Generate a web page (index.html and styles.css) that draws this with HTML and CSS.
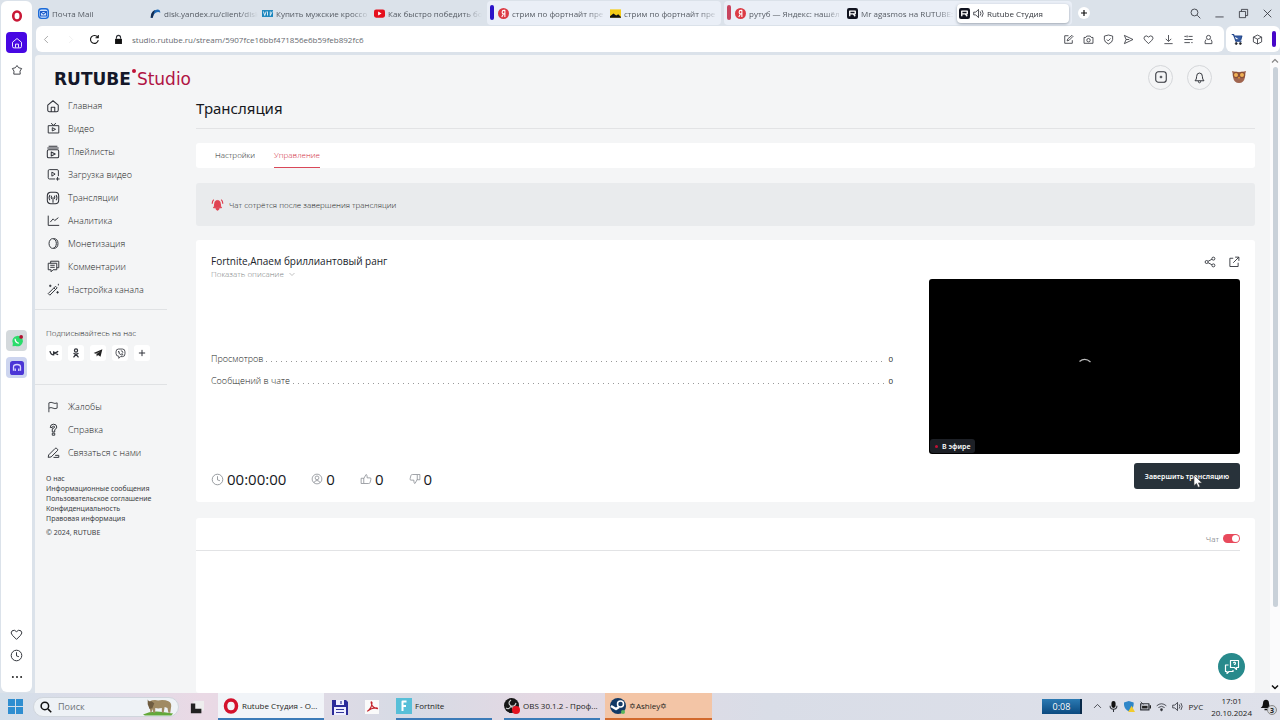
FILE: index.html
```html
<!DOCTYPE html>
<html lang="ru">
<head>
<meta charset="utf-8">
<title>Rutube Студия</title>
<link rel="stylesheet" href="styles.css">
</head>
<body>
<svg class="sprite" aria-hidden="true">
  <symbol id="home" viewBox="0 0 16 16"><path d="M2 7 8 2l6 5v5.500q0 2-2 2H4q-2 0-2-2zM6 14V9.500h4V14"/></symbol>
  <symbol id="star" viewBox="0 0 16 16"><path d="m8 2 2.200 3 4 1-2.200 3.500.3 4H3.700L4 9.500 1.800 6l4-1z"/></symbol>
  <symbol id="heart" viewBox="0 0 16 16"><path d="M8 14 3 9Q0 6 2.500 3.500 5.500 1.500 8 4.500q2.500-3 5.500-1Q16 6 13 9z"/></symbol>
  <symbol id="clock" viewBox="0 0 16 16"><circle cx="8" cy="8" r="6.500"/><path d="M8 4v4.500l3 1"/></symbol>
  <symbol id="search" viewBox="0 0 16 16"><circle cx="6.500" cy="6.500" r="5"/><path d="m10.500 10.500 4.500 4.500"/></symbol>
  <symbol id="video" viewBox="0 0 16 16"><path d="M1.500 4.500h13v9h-13zM5 1.500 8 4l3-2.500M6.500 7v4l4-2z"/></symbol>
  <symbol id="playlist" viewBox="0 0 16 16"><path d="M3 1.500h10M1.500 3.500h13M3 5.500h10q1.500 0 1.500 1.500v6q0 1.500-1.500 1.500H3q-1.500 0-1.500-1.500V7Q1.500 5.500 3 5.500zM6 8v4.500l4.500-2.200z"/></symbol>
  <symbol id="upload" viewBox="0 0 16 16"><path d="M10 13.500H3q-1.500 0-1.500-1.500V3.500Q1.500 2 3 2h9.500Q14 2 14 3.500V10M6 5v5l4-2.500zM13 11v4.500M11 13.500h4.500"/></symbol>
  <symbol id="stream" viewBox="0 0 16 16"><rect x="1.500" y="1.500" width="13" height="13" rx="4"/><path d="M8 7v6.500M4.500 4.500q-2 3 0 6M11.500 4.500q2 3 0 6M6.500 5.500q-1.200 1.800 0 3.500M9.500 5.500q1.200 1.800 0 3.500"/></symbol>
  <symbol id="chart" viewBox="0 0 16 16"><path d="M1.500 2v12H15M4 10l3.500-4 2 2L14 4.500"/></symbol>
  <symbol id="coin" viewBox="0 0 16 16"><ellipse cx="7" cy="8" rx="4.500" ry="6"/><path d="M8 2q5.500 0 5.500 6T8 14"/></symbol>
  <symbol id="comments" viewBox="0 0 16 16"><path d="M4.500 4V1.500h10v8H12M1.500 4H12v8H7.500L5 14.500V12H1.500zM4 6.500h5.500M4 9h5.500"/></symbol>
  <symbol id="wand" viewBox="0 0 16 16"><path d="m1.500 13 9-9L12.500 6l-9 9zM8.500 6l2 2M4 2v3M2.500 3.500h3M13 10v3M11.500 11.500h3M14 1v2"/></symbol>
  <symbol id="flag" viewBox="0 0 16 16"><path d="M2.500 15V2.500q3-1.500 5.500 0t5.500 0v7q-3 1.500-5.500 0t-5.500 0"/></symbol>
  <symbol id="help" viewBox="0 0 16 16"><path d="M4 5.500Q4 1.500 8 1.500T12 5Q12 7 9.500 8.200V11h-3V7Q9.500 6 9.500 5q0-1-1.500-1T6.500 5.500zM6.500 12.500h3V15h-3z"/></symbol>
  <symbol id="edit" viewBox="0 0 16 16"><path d="m2 11 8-8q1-1 2 0l.8.8q1 1 0 2L5 13.500l-3.500.5zM8 14h6.500M10 11.500h4.500V14"/></symbol>
  <symbol id="share" viewBox="0 0 16 16"><circle cx="3.500" cy="8" r="2"/><circle cx="12.500" cy="3.500" r="2"/><circle cx="12.500" cy="12.500" r="2"/><path d="m5.500 7 5-2.600M5.500 9l5 2.600"/></symbol>
  <symbol id="external" viewBox="0 0 16 16"><path d="M7 3H2.500v11h11V9M9.500 1.500h5v5M14.500 1.500 7 9"/></symbol>
  <symbol id="bell" viewBox="0 0 16 16"><path d="M2.500 12q2-1.500 2-5.500 0-4 3.500-4t3.500 4q0 4 2 5.500zM6.500 12.500q0 2 1.500 2t1.500-2"/></symbol>
  <symbol id="add" viewBox="0 0 16 16"><rect x="2" y="2" width="12" height="12" rx="3"/><path d="M8 6.500v3M6.500 8h3"/></symbol>
  <symbol id="user" viewBox="0 0 16 16"><circle cx="8" cy="8" r="6.500"/><circle cx="8" cy="6.500" r="2.500"/><path d="M4 13q1-3 4-3t4 3"/></symbol>
  <symbol id="like" viewBox="0 0 16 16"><path d="M1.500 7H5v7H1.500zM5 7.500 8 2q2 0 1.500 4.500h4q1.500 0 1 2l-1 4q-.3 1.500-2 1.500H5"/></symbol>
  <symbol id="dislike" viewBox="0 0 16 16"><path d="M14.500 9H11V2h3.500zM11 8.500 8 14q-2 0-1.500-4.500h-4q-1.500 0-1-2l1-4Q2.800 2 4.500 2H11"/></symbol>
  <symbol id="down" viewBox="0 0 16 16"><path d="m3 6 5 5 5-5"/></symbol>
  <symbol id="sound" viewBox="0 0 16 16"><path d="M1 6h3l4-4v12l-4-4H1zM10.500 5q2 3 0 6M13 3q3.500 5 0 10"/></symbol>
  <symbol id="rutube" viewBox="0 0 16 16"><rect width="16" height="16" rx="3" fill="#10131f" stroke="none"/><path d="M4 12V4.500h8v4H4M9 8.500l3 3.500" stroke="#fff" stroke-width="2"/></symbol>
  <symbol id="yandex" viewBox="0 0 16 16"><circle cx="8" cy="8" r="8" fill="#dc3b45" stroke="none"/><path d="M10 13V3.500H8.500Q6 3.500 6 6t2.500 2.500H10M8 8.500 5.500 13" stroke="#fff" stroke-width="1.600"/></symbol>
</svg>

<div class="desktop">
  <div class="browser">
    <aside class="dock" aria-label="Боковая панель">
      <div class="dock-group">
        <button class="dock-btn" aria-label="Opera"><svg class="i12" viewBox="0 0 16 16"><ellipse cx="8" cy="8" rx="5" ry="6" stroke="#c91836" stroke-width="3.500"/></svg></button>
        <button class="dock-btn active" aria-label="Домой"><svg class="i12"><use href="#home"/></svg></button>
        <button class="dock-btn" aria-label="Закладки"><svg class="i12"><use href="#star"/></svg></button>
      </div>
      <div class="dock-group">
        <button class="dock-btn grey" aria-label="WhatsApp"><svg class="i12" viewBox="0 0 16 16"><path d="M2 15 2.500 11A7 7 0 1 1 6 14.500z" fill="#2bdc6b" stroke="none"/><path d="M5.500 5q0 5 5 6" stroke="#fff" stroke-width="1.600"/><circle cx="13.500" cy="2.500" r="2.500" fill="#b01030" stroke="none"/></svg></button>
        <button class="dock-btn lilac" aria-label="Плеер"><svg class="i14" viewBox="0 0 16 16"><rect width="16" height="16" rx="3" fill="#4a35d6" stroke="none"/><path d="M4 11V7q0-3 4-3t4 3v4M6 8.500v3M10 8.500v3" stroke="#d8d4ff" stroke-width="1.500"/></svg></button>
      </div>
      <div class="dock-group">
        <button class="dock-btn" aria-label="Избранное"><svg class="i13"><use href="#heart"/></svg></button>
        <button class="dock-btn" aria-label="История"><svg class="i13"><use href="#clock"/></svg></button>
        <button class="dock-btn" aria-label="Ещё"><svg class="i12" viewBox="0 0 16 16"><g fill="#222" stroke="none"><circle cx="2.500" cy="8" r="1.300"/><circle cx="8" cy="8" r="1.300"/><circle cx="13.500" cy="8" r="1.300"/></g></svg></button>
      </div>
    </aside>

    <div class="window">
      <div class="tabs">
        <button class="tab"><svg class="i11" viewBox="0 0 16 16"><rect x="1" y="1" width="14" height="14" rx="4" fill="#cfe3ff" stroke="#1c6bd8" stroke-width="2"/><path d="M3.500 5h9v6.500h-9zl4.500 4 4.500-4" stroke="#1c5bc8" stroke-width="1.500"/></svg><span>Почта Mail</span></button>
        <button class="tab"><svg class="i11" viewBox="0 0 16 16"><path d="M1 14Q1 3 11 2q4 0 4 5-2-2-5-1Q5 8 4 14z" fill="#1d67b5" stroke="none"/><path d="M1 14q0-8 6-11l-3 11z" fill="#142c50" stroke="none"/></svg><span>disk.yandex.ru/client/disk</span></button>
        <button class="tab"><svg class="i11" viewBox="0 0 16 16"><rect y="3" width="16" height="10" fill="#1784bd" stroke="none"/><path d="m2 5 2 6 2-6M8 5v6M12 5v6l3-6" stroke="#fff"/></svg><span>Купить мужские кроссо</span></button>
        <button class="tab"><svg class="i11" viewBox="0 0 16 16"><rect y="2" width="16" height="12" rx="3" fill="#e5101d" stroke="none"/><path d="M6 5v6l5-3z" fill="#fff" stroke="none"/></svg><span>Как быстро победить бо</span></button>
        <div class="tab-group blue">
          <button class="tab"><svg class="i11"><use href="#yandex"/></svg><span>стрим по фортнайт пре</span></button>
          <button class="tab"><svg class="i11" viewBox="0 0 16 16"><rect y="2" width="16" height="12" fill="#f5cc16" stroke="none"/><path d="M0 14v-2l5-4 4 3 3-2 4 4v1z" fill="#111" stroke="none"/></svg><span>стрим по фортнайт пре</span></button>
        </div>
        <div class="tab-group red">
          <button class="tab"><svg class="i11"><use href="#yandex"/></svg><span>рутуб — Яндекс: нашёл</span></button>
          <button class="tab"><svg class="i11"><use href="#rutube"/></svg><span>Mr agasmos на RUTUBE:</span></button>
          <button class="tab current"><svg class="i11"><use href="#rutube"/></svg><svg class="i11"><use href="#sound"/></svg><span>Rutube Студия</span></button>
        </div>
        <button class="new-tab" aria-label="Новая вкладка"><svg class="i8" viewBox="0 0 8 8"><path d="M4 1v6M1 4h6" stroke="#111"/></svg></button>
        <div class="win-controls">
          <button aria-label="Поиск вкладок"><svg class="i11"><use href="#search"/></svg></button>
          <button aria-label="Свернуть"><svg class="i11" viewBox="0 0 16 16"><path d="M2 13h12"/></svg></button>
          <button aria-label="Развернуть"><svg class="i11" viewBox="0 0 16 16"><path d="M2 5h9v9H2zM5 5V2h9v9h-3"/></svg></button>
          <button aria-label="Закрыть"><svg class="i11" viewBox="0 0 16 16"><path d="m2.500 2.500 11 11M13.500 2.500l-11 11"/></svg></button>
        </div>
      </div>

      <div class="address-row">
        <div class="address">
          <button class="dim" aria-label="Назад"><svg class="i11" viewBox="0 0 16 16"><path d="m10 3-5 5 5 5"/></svg></button>
          <button class="faint" aria-label="Вперёд"><svg class="i11" viewBox="0 0 16 16"><path d="m6 3 5 5-5 5"/></svg></button>
          <button aria-label="Обновить"><svg class="i11" viewBox="0 0 16 16"><path d="M12.500 4.500A5.700 5.700 0 1 0 13.500 9M13.500 1.500v4h-4" stroke="#111" stroke-width="1.600"/></svg></button>
          <svg class="i11" viewBox="0 0 16 16"><path d="M3 7h10v7.500H3z" fill="#111" stroke="none"/><path d="M5 7V5q0-3 3-3t3 3v2" stroke-width="1.600"/></svg>
          <input class="url" type="text" aria-label="Адрес" value="studio.rutube.ru/stream/5907fce16bbf471856e6b59feb892fc6">
          <div class="address-tools">
            <button aria-label="Заметка"><svg class="i11" viewBox="0 0 16 16"><path d="M8 2.500H2.500v11h11V9M6 10l1-3 6-5 1.500 1.500L9 9z"/></svg></button>
            <button aria-label="Снимок"><svg class="i11" viewBox="0 0 16 16"><path d="M1.500 5H4l1.500-2h5L12 5h2.500v8.500h-13z"/><circle cx="8" cy="9" r="2.500"/></svg></button>
            <button aria-label="Защита"><svg class="i11" viewBox="0 0 16 16"><path d="M8 1.500 14 3v5q0 4-6 6.500Q2 12 2 8V3zM5.500 8l2 2 3.500-3.500"/></svg></button>
            <button aria-label="Отправить"><svg class="i11" viewBox="0 0 16 16"><path d="m2 2 12.500 6L2 14l2.500-6zM4.500 8H9"/></svg></button>
            <button aria-label="Нравится"><svg class="i11"><use href="#heart"/></svg></button>
            <button aria-label="Загрузки"><svg class="i11" viewBox="0 0 16 16"><path d="M8 1.500V10M4 7l4 4 4-4M2 14h12"/></svg></button>
            <button aria-label="Настройки"><svg class="i11" viewBox="0 0 16 16"><path d="M2 3.500h3M8 3.500h6M2 8h12M2 12.500h8M12 12.500h2M6 2v3"/></svg></button>
            <button aria-label="Профиль"><svg class="i11" viewBox="0 0 16 16"><circle cx="8" cy="5" r="3"/><path d="M4.500 8Q2.500 10 3 14h10q.5-4-1.500-6"/></svg></button>
          </div>
        </div>
        <div class="extras">
          <button aria-label="Покупки"><svg class="i12" viewBox="0 0 16 16"><path d="M1 2h2.500l3 9H14M4 4h10.500L13 9H6z" fill="#365da8" stroke="#274a8c" stroke-width="1.500"/><circle cx="7" cy="14" r="1.300" fill="#222"/><circle cx="12.500" cy="14" r="1.300" fill="#222"/></svg></button>
          <button aria-label="Расширения"><svg class="i11" viewBox="0 0 16 16"><path d="m8 1.500 6 3v7l-6 3-6-3v-7zM2 4.500l6 3 6-3M8 7.500v7"/></svg></button>
          <span class="purple-bar"></span>
        </div>
      </div>

      <div class="viewport">
        <div class="page">
          <header class="top">
            <a class="logo" href="#"><span>RUTUBE</span><i class="logo-dot"></i><span class="logo-studio">Studio</span></a>
            <div class="top-actions">
              <button class="round" aria-label="Добавить"><svg class="i14"><use href="#add"/></svg></button>
              <button class="round" aria-label="Уведомления"><svg class="i13"><use href="#bell"/></svg></button>
              <button class="avatar" aria-label="Профиль"><svg class="i16" viewBox="0 0 16 16"><path d="M1 2q3 1 7 1t7-1q-1 3-1 6-1 6-6 6T2 8Q2 5 1 2z" fill="#a0654f" stroke="none"/><circle cx="5" cy="6" r="2.600" fill="#f0b155" stroke="#8a4f38"/><circle cx="11" cy="6" r="2.600" fill="#f0b155" stroke="#8a4f38"/><path d="m7 8 1 2.500L9 8z" fill="#e69635" stroke="none"/></svg></button>
            </div>
          </header>
          <div class="columns">
            <nav class="side">
              <ul class="menu">
                <li><a href="#"><svg class="i14"><use href="#home"/></svg>Главная</a></li>
                <li><a href="#"><svg class="i13"><use href="#video"/></svg>Видео</a></li>
                <li><a href="#"><svg class="i14"><use href="#playlist"/></svg>Плейлисты</a></li>
                <li><a href="#"><svg class="i13"><use href="#upload"/></svg>Загрузка видео</a></li>
                <li><a href="#"><svg class="i14"><use href="#stream"/></svg>Трансляции</a></li>
                <li><a href="#"><svg class="i13"><use href="#chart"/></svg>Аналитика</a></li>
                <li><a href="#"><svg class="i13"><use href="#coin"/></svg>Монетизация</a></li>
                <li><a href="#"><svg class="i13"><use href="#comments"/></svg>Комментарии</a></li>
                <li><a href="#"><svg class="i13"><use href="#wand"/></svg>Настройка канала</a></li>
              </ul>
              <section class="follow">
                <p>Подписывайтесь на нас</p>
                <div class="socials">
                  <a href="#" aria-label="ВКонтакте"><svg class="i10" viewBox="0 0 16 16"><path d="M1.500 5Q3 11 7.500 11V5M14.500 5Q13 7.500 8 8q4 .5 6.500 3" stroke-width="2.200"/></svg></a>
                  <a href="#" aria-label="Одноклассники"><svg class="i10" viewBox="0 0 16 16"><circle cx="8" cy="4" r="2.500" stroke-width="2"/><path d="M4 8.500q4 2.500 8 0M8 10l-4 5M8 10l4 5" stroke-width="2"/></svg></a>
                  <a href="#" aria-label="Telegram"><svg class="i10" viewBox="0 0 16 16"><path d="m1 8 14-6-3 12-4-3-2 2.500-.5-4L12 5 4.500 9z" fill="#222" stroke="none"/></svg></a>
                  <a href="#" aria-label="Viber"><svg class="i11" viewBox="0 0 16 16"><path d="M5 1.500h6q3.500 0 3.500 4v3q0 4-3.500 4H8L5.500 15v-3q-4 0-4-4V5.500q0-4 3.500-4zM5 4.500q0 5 5.500 6l1-1.500-2-1M5 4.500 6.500 6.500M8.500 4q3 0 3 3"/></svg></a>
                  <a href="#" aria-label="Ещё"><svg class="i10" viewBox="0 0 16 16"><path d="M8 3v10M3 8h10" stroke-width="1.600"/></svg></a>
                </div>
              </section>
              <ul class="menu">
                <li><a href="#"><svg class="i12"><use href="#flag"/></svg>Жалобы</a></li>
                <li><a href="#"><svg class="i13"><use href="#help"/></svg>Справка</a></li>
                <li><a href="#"><svg class="i13"><use href="#edit"/></svg>Связаться с нами</a></li>
              </ul>
              <div class="legal">
                <a href="#">О нас</a>
                <a href="#">Информационные сообщения</a>
                <a href="#">Пользовательское соглашение</a>
                <a href="#">Конфиденциальность</a>
                <a href="#">Правовая информация</a>
                <p>© 2024, RUTUBE</p>
              </div>
            </nav>

            <main class="main">
              <h1>Трансляция</h1>
              <div class="page-tabs">
                <a href="#">Настройки</a>
                <a href="#" class="on">Управление</a>
              </div>
              <div class="notice">
                <svg class="i13" viewBox="0 0 16 16"><path d="M3 12q1.500-1 1.500-5 0-4 3.500-4t3.500 4q0 4 1.500 5zM6 13h4q-.5 2-2 2t-2-2z" fill="#e04352" stroke="#e04352"/><path d="M1.500 7q0-3.500 2-5M14.500 7q0-3.500-2-5" stroke="#e04352" stroke-width="1.500"/></svg>
                <span>Чат сотрётся после завершения трансляции</span>
              </div>
              <section class="card live">
                <div class="live-head">
                  <div>
                    <h2>Fortnite,Апаем бриллиантовый ранг</h2>
                    <button class="describe">Показать описание <svg class="i8"><use href="#down"/></svg></button>
                  </div>
                  <div class="live-actions">
                    <button aria-label="Поделиться"><svg class="i12"><use href="#share"/></svg></button>
                    <button aria-label="Открыть"><svg class="i12"><use href="#external"/></svg></button>
                  </div>
                </div>
                <div class="live-body">
                  <dl class="stats">
                    <div><dt>Просмотров</dt><dd>0</dd></div>
                    <div><dt>Сообщений в чате</dt><dd>0</dd></div>
                  </dl>
                  <div class="player">
                    <svg class="i16" viewBox="0 0 16 16"><path d="M2.500 7.500Q8 3 13.500 8" stroke="#bbb" stroke-width="1.300"/></svg>
                    <span class="on-air"><i></i>В эфире</span>
                  </div>
                </div>
                <div class="live-foot">
                  <div class="counters">
                    <span class="timer"><svg class="i13"><use href="#clock"/></svg>00:00:00</span>
                    <span><svg class="i12"><use href="#user"/></svg>0</span>
                    <span><svg class="i12"><use href="#like"/></svg>0</span>
                    <span><svg class="i12"><use href="#dislike"/></svg>0</span>
                  </div>
                  <div class="finish-wrap">
                    <button class="finish">Завершить трансляцию</button>
                    <svg class="pointer" viewBox="0 0 10 14"><path d="M1 1v10.500l2.500-2 1.700 3.800 1.800-.8-1.600-3.600H9z" fill="#fff" stroke="#444" stroke-width=".6"/></svg>
                  </div>
                </div>
              </section>
              <section class="card chat">
                <label class="chat-head">Чат <input type="checkbox" role="switch" checked></label>
              </section>
            </main>
          </div>
          <button class="support" aria-label="Поддержка"><svg class="i16" viewBox="0 0 16 16"><path d="M6.500 1.500h8v7h-2v2l-2-2h-4zM4.500 6h-3v6.500H3v2l2-2h4V11M9.500 4.200q0-1 1-1t1 1-1 1.300V6"/></svg></button>
        </div>
        <div class="scrollbar" aria-hidden="true">
          <svg class="i8"><path d="M1 5.500 4 2.500l3 3" stroke="#888"/></svg>
          <div class="track"><div class="thumb"></div></div>
          <svg class="i8"><path d="m1 2.500 3 3 3-3" stroke="#111" stroke-width="1.500"/></svg>
        </div>
      </div>
    </div>
  </div>

  <footer class="taskbar">
    <button class="start" aria-label="Пуск"><svg class="i15" viewBox="0 0 15 15"><path d="M0 0h7v7H0zM8 0h7v7H8zM0 8h7v7H0zM8 8h7v7H8z" fill="#2f8ed0" stroke="none"/></svg></button>
    <label class="task-search"><svg class="i12 bold"><use href="#search"/></svg><input type="text" placeholder="Поиск" aria-label="Поиск"><svg class="buffalo" viewBox="0 0 34 18"><path d="M0 17q8-4 18-3t14 2l-2 2H2z" fill="#63a83a" stroke="none"/><path d="M7 3q4-2 9-1 7-1 11 1 3 1 3 5l-1 7h-2l-1-5-3-1-1 6h-2v-5q-4 1-7 0v5h-2l-1-4-1 4H8l-1-6z" fill="#a08a63" stroke="none"/><path d="M5 1q1 3 4 2l3 2-2 5-3 1-2-5z" fill="#6f5c40" stroke="none"/></svg></label>
    <button class="small-app" aria-label="Задачи"><svg class="i14" viewBox="0 0 16 16"><path d="M4 1h12v11H4z" fill="#eee" stroke="none"/><path d="M1 4h5v6h7v5H1z" fill="#222" stroke="none"/></svg></button>
    <button class="task wide lit"><svg class="i16" viewBox="0 0 16 16"><ellipse cx="8" cy="8" rx="5.500" ry="6" stroke="#d3122c" stroke-width="3.500"/></svg><span>Rutube Студия - О...</span></button>
    <button class="small-app" aria-label="Total Commander"><svg class="i16" viewBox="0 0 16 16"><path d="M0 1h14l2 2v13H0z" fill="#2b2b9a" stroke="none"/><path d="M4 1h8v5H4zM2 8h12v8H2z" fill="#eef" stroke="none"/><path d="M9 2v3M4 10.500h8M4 13.500h8" stroke="#33379a"/></svg></button>
    <button class="small-app" aria-label="PDF"><svg class="i14" viewBox="0 0 16 16"><rect width="16" height="16" fill="#fafafa" stroke="none"/><path d="M2.500 13Q8 9 8 3q-1-2-1 0 1 6 7 7 1-1-1-1-6 0-10.500 4" stroke="#c4232b" stroke-width="1.300"/></svg></button>
    <button class="task"><svg class="i16" viewBox="0 0 16 16"><rect width="16" height="16" fill="#57bfd8" stroke="none"/><path d="M6.500 13V3.500h4M6.500 8H10" stroke="#fff" stroke-width="2"/></svg><span>Fortnite</span></button>
    <button class="task"><svg class="i16" viewBox="0 0 16 16"><circle cx="7.500" cy="7.500" r="7.500" fill="#171717" stroke="none"/><path d="M7 2q-4 3 0 6 4 1 5-3M7 8q-2 4-5 2M7 8l3 4" stroke="#ccc"/><circle cx="12" cy="12" r="4" fill="#e31320" stroke="none"/></svg><span>OBS 30.1.2 - Проф...</span></button>
    <button class="task wide alert"><svg class="i16" viewBox="0 0 16 16"><circle cx="8" cy="8" r="8" fill="#123a66" stroke="none"/><circle cx="10.500" cy="6" r="3" stroke="#fff" stroke-width="1.500"/><path d="m1 8 5 3 3-2" stroke="#fff" stroke-width="2.500"/><circle cx="13" cy="14" r="2" fill="#5bb75b" stroke="none"/></svg><span>✡Ashley✡</span></button>
    <div class="tray">
      <span class="battery-time">0:08</span>
      <svg class="i11" viewBox="0 0 16 16"><path d="m3 10 5-5 5 5"/></svg>
      <svg class="i11" viewBox="0 0 16 16"><rect x="5" y="0" width="6" height="10" rx="3" fill="#111" stroke="none"/><path d="M3 7q0 5 5 5t5-5M8 12v4" stroke-width="1.500"/></svg>
      <svg class="i11" viewBox="0 0 16 16"><path d="M7 0 14 2q1 9-7 13Q-1 11 0 2z" fill="#2f86c8" stroke="none"/><path d="m11 7 5 9H6z" fill="#f2cb2c" stroke="none"/></svg>
      <svg class="i11" viewBox="0 0 16 16"><path d="M1 4h12v9H1z" stroke-width="1.800"/><path d="M3 7h8v4H3zM14 6h2v5h-2z" fill="#222" stroke="none"/><path d="m1 1 4 4"/></svg>
      <svg class="i11" viewBox="0 0 16 16"><path d="M1 7q7-6 14 0M3.500 9.500Q8 6 12.500 9.500M6 12q2-1.500 4 0"/><circle cx="8" cy="13" r="1.200" fill="#222"/></svg>
      <svg class="i11"><use href="#sound"/></svg>
      <span class="lang">РУС</span>
      <time class="clock"><span>17:01</span><span>20.10.2024</span></time>
      <span class="bell-wrap"><svg class="i12" viewBox="0 0 16 16"><path d="M1 12q3-2 3-6 0-5 4-5t4 5q0 4 3 6zM6 13h4v2H6z" fill="#111" stroke="none"/></svg><b>3</b></span>
    </div>
  </footer>
</div>
</body>
</html>
```

FILE: styles.css
```css
* { box-sizing: border-box; margin: 0; padding: 0; }

body {
  font-family: "Open Sans", "Noto Sans", sans-serif;
  font-size: 9px;
  color: #3c3f45;
  background: #dbe2ea;
}

button, input {
  font: inherit;
  color: inherit;
  background: none;
  border: 0;
}

button { display: flex; align-items: center; justify-content: center; }
a { color: inherit; text-decoration: none; }
ul { list-style: none; }

svg {
  flex: none;
  fill: none;
  stroke: #30333a;
  stroke-width: 1.2;
  stroke-linejoin: round;
}

.sprite { position: absolute; width: 0; height: 0; }
.i8 { width: 8px; height: 8px; }
.i10 { width: 10px; height: 10px; }
.i11 { width: 11px; height: 11px; }
.i12 { width: 12px; height: 12px; }
.i13 { width: 13px; height: 13px; }
.i14 { width: 14px; height: 14px; }
.i15 { width: 15px; height: 15px; }
.i16 { width: 16px; height: 16px; }
.bold { stroke: #111; stroke-width: 2; }

.desktop { display: flex; flex-direction: column; height: 100vh; overflow: hidden; }
.browser { flex: 1; min-height: 0; display: flex; }

/* Opera sidebar */
.dock {
  flex: none;
  width: 31px;
  margin: 1px 3px 1px 1px;
  padding: 4px 0 5px;
  display: flex;
  flex-direction: column;
  justify-content: space-between;
  background: #fff;
  border-radius: 6px;
}
.dock-group { display: flex; flex-direction: column; align-items: center; gap: 6px; }
.dock-group:first-child { padding-bottom: 172px; }
.dock-group:nth-child(2) { padding-bottom: 168px; }
.dock-group:last-child { gap: 0; }
.dock-btn { width: 21px; height: 21px; border-radius: 4px; }
.dock-btn.active { background: #4707e3; }
.dock-btn.active svg { stroke: #fff; }
.dock-btn.grey { background: #d4d9dc; }
.dock-btn.lilac { background: #cdd5ef; }

.window { flex: 1; min-width: 0; display: flex; flex-direction: column; }

/* Tab strip */
.tabs { flex: none; height: 26px; padding-left: 1px; display: flex; align-items: center; font-size: 8px; color: #555b63; }
.tab {
  flex: 0 1 112px;
  min-width: 0;
  height: 19px;
  padding: 0 2px;
  gap: 3px;
  justify-content: flex-start;
}
.tab span {
  flex: 1;
  min-width: 0;
  text-align: left;
  white-space: nowrap;
  overflow: hidden;
  -webkit-mask-image: linear-gradient(90deg, #000 80%, transparent);
  mask-image: linear-gradient(90deg, #000 80%, transparent);
}
.tab-group {
  flex: 0 1 234px;
  min-width: 0;
  height: 24px;
  margin-left: 3px;
  padding-left: 9px;
  display: flex;
  align-items: center;
  background: #eaeff7;
  border-radius: 4px;
  position: relative;
}
.tab-group.red { flex-basis: 348px; padding-right: 3px; }
.tab-group::before { content: ""; position: absolute; left: 3px; top: 4px; width: 4px; height: 15px; border-radius: 2px; background: #2a12c8; }
.tab-group.red::before { background: #c8455f; }
.tab.current { background: #fff; border-radius: 4px; box-shadow: 0 1px 3px #9aa3ad; color: #33363c; }
.new-tab { flex: none; width: 12px; height: 12px; margin-left: 6px; border-radius: 50%; background: #fff; }
.win-controls { display: flex; gap: 13px; margin-left: auto; padding-right: 7px; }

/* Address row */
.address-row { flex: none; height: 26px; padding-left: 1px; display: flex; gap: 2px; }
.address { flex: 1; min-width: 0; display: flex; align-items: center; gap: 13px; padding: 0 10px 0 5px; background: #fff; border-radius: 6px; }
.dim svg { stroke: #999; }
.faint svg { stroke: #eee; }
.url { flex: 1; min-width: 0; margin-left: -5px; font-size: 8px; color: #666a70; outline: 0; }
.address-tools { display: flex; gap: 9px; }
.extras { flex: none; display: flex; align-items: center; gap: 9px; padding: 0 4px 0 5px; background: #fff; border-radius: 6px; }
.purple-bar { width: 4px; height: 16px; border-radius: 2px; background: #4707c8; }

/* Page */
.viewport { flex: 1; min-height: 0; margin-top: 3px; display: flex; background: #f4f5f6; border-radius: 4px 0 0 0; }
.page { flex: 1; min-width: 0; position: relative; display: flex; flex-direction: column; overflow: hidden; }
.top { flex: none; display: flex; align-items: center; justify-content: space-between; height: 39px; padding: 5px 19px 0; }
.logo { display: flex; align-items: center; gap: 1px; margin-top: 4px; font-family: "DejaVu Sans", sans-serif; font-size: 17px; line-height: 20px; font-weight: 700; color: #14182a; }
.logo-dot { align-self: flex-start; width: 4px; height: 4px; border-radius: 50%; background: #c01236; }
.logo-studio { font-weight: 400; color: #b01444; }
.top-actions { display: flex; align-items: center; gap: 14px; }
.round { width: 25px; height: 25px; border: 1px solid #d5d7da; border-radius: 50%; }
.avatar { width: 25px; height: 25px; }

.columns { flex: 1; min-height: 0; display: flex; font-weight: 300; color: #1c1f25; }
.side { flex: none; width: 161px; padding: 0 29px 0 0; }
.menu { padding-left: 11px; }
.menu a { display: grid; grid-template-columns: 14px 1fr; gap: 8px; align-items: center; height: 23px; }
.menu svg { justify-self: center; }
.follow { margin: 8px 0 10px; padding: 17px 0 23px 11px; border-top: 1px solid #e0e2e4; border-bottom: 1px solid #e0e2e4; font-size: 8px; }
.follow p { line-height: 12px; }
.socials { display: flex; gap: 6px; margin-top: 6px; }
.socials a { width: 16px; height: 16px; display: flex; align-items: center; justify-content: center; background: #fff; border-radius: 3px; }
.legal { display: flex; flex-direction: column; padding: 10px 0 0 11px; font-family: "Noto Sans", sans-serif; font-size: 7px; font-weight: 400; line-height: 10px; color: #3c3f45; }
.legal p { margin-top: 4px; }

.main { flex: 1; min-width: 0; margin-right: 15px; display: flex; flex-direction: column; }
h1 { margin: 4px 0 14px; padding-bottom: 10px; border-bottom: 1px solid #e2e3e5; font-family: "Noto Sans", sans-serif; font-size: 15px; line-height: 20px; font-weight: 400; color: #16181d; }
.page-tabs { display: flex; gap: 19px; padding: 0 19px; background: #fff; border-radius: 3px; font-size: 8px; }
.page-tabs a { height: 25px; line-height: 24px; border-bottom: 1px solid transparent; }
.page-tabs .on { color: #d02c40; border-color: #d94858; }
.notice { flex: none; display: flex; align-items: center; gap: 5px; height: 43px; margin: 15px 0 14px; padding: 0 15px; background: #e9ebed; border-radius: 3px; font-size: 8px; }
.card { background: #fff; border-radius: 3px; }

.live { flex: none; padding: 14px 15px 13px; }
.live-head { display: flex; justify-content: space-between; }
h2 { font-size: 10px; line-height: 14px; font-weight: 500; color: #202329; }
.describe { gap: 4px; height: 11px; font-size: 8px; color: #7c7f84; }
.describe svg { stroke: #999; }
.live-actions { display: flex; gap: 12px; align-items: flex-start; padding-top: 2px; }
.live-body { display: flex; gap: 36px; }
.stats { flex: 1; display: flex; flex-direction: column; justify-content: center; gap: 9px; padding-top: 5px; }
.stats div { display: flex; align-items: flex-end; line-height: 13px; }
.stats div::before { content: ""; order: 1; flex: 1; height: 1px; margin: 0 4px 3px 3px; background: repeating-linear-gradient(90deg, #999 0 1px, transparent 1px 5px); }
.stats dd { order: 2; font-size: 8px; font-weight: 400; }
.player { flex: none; width: 311px; height: 175px; padding-bottom: 10px; display: flex; align-items: center; justify-content: center; position: relative; background: #000; border-radius: 3px; }
.on-air { position: absolute; left: 1px; bottom: 1px; display: flex; align-items: center; gap: 4px; height: 14px; padding: 0 5px; background: #1d2026; border-radius: 3px; font-family: "Noto Sans", sans-serif; font-size: 7px; font-weight: 600; color: #fff; }
.on-air i { width: 3px; height: 3px; border-radius: 50%; background: #c01236; }
.live-foot { display: flex; align-items: center; justify-content: space-between; margin-top: 9px; }
.counters { display: flex; gap: 25px; padding-top: 6px; font-size: 15px; font-weight: 400; line-height: 19px; color: #16181d; }
.counters span { display: flex; align-items: center; gap: 3px; }
.counters svg { stroke: #83878d; stroke-width: 1; }
.finish-wrap { position: relative; }
.finish { height: 26px; padding: 0 11px; background: #28323a; border-radius: 3px; font-family: "Noto Sans", sans-serif; font-size: 7px; font-weight: 600; color: #fff; }
.pointer { position: absolute; right: 37px; top: 11px; width: 10px; height: 14px; }

.chat { flex: 1; margin-top: 16px; padding: 0 15px 0 0; }
.chat-head { display: flex; align-items: center; justify-content: flex-end; gap: 4px; height: 33px; padding-top: 8px; border-bottom: 1px solid #e2e3e5; font-size: 8px; color: #55595e; }
.chat-head input { appearance: none; display: flex; align-items: center; justify-content: flex-end; width: 17px; height: 9px; padding: 1px; border-radius: 5px; background: #e84a5c; }
.chat-head input::before { content: ""; width: 7px; height: 7px; border-radius: 50%; background: #fff; }
.support { position: absolute; right: 25px; bottom: 13px; width: 27px; height: 27px; border-radius: 50%; background: #288a8c; }
.support svg { stroke: #fff; }

.scrollbar { flex: none; width: 10px; padding: 2px 0; display: flex; flex-direction: column; align-items: center; background: #fbfbfc; }
.track { flex: 1; width: 5px; margin: 2px 0; }
.thumb { height: 88%; background: #c9d1d9; border-radius: 3px; }

/* Taskbar */
.taskbar { flex: none; height: 27px; display: flex; align-items: center; padding: 0 5px 0 8px; background: linear-gradient(90deg, #d3dfea, #ead9e5 16%, #d6dbe5 32%, #e4d8e3 42%, #d9dde7 60%, #dfe1ea); font-size: 8px; color: #1c1e22; }
.task-search { display: flex; align-items: center; gap: 6px; width: 146px; height: 20px; margin: 0 10px; padding: 0 3px 0 6px; background: #eef2f6; border: 1px solid #d0d6dd; border-radius: 10px; font-size: 9px; }
.task-search input { flex: 1; min-width: 0; outline: 0; }
.task-search input::placeholder { color: #6d7278; }
.buffalo { width: 32px; height: 18px; }
.small-app { flex: none; width: 16px; height: 27px; margin-right: 16px; }
.task-search + .small-app { margin-right: 13px; }
.task { flex: none; width: 96px; height: 27px; margin-right: 12px; gap: 3px; justify-content: flex-start; white-space: nowrap; border-bottom: 2px solid #3c7bb8; }
.task.wide { width: 106px; margin-right: 8px; padding-left: 5px; }
.task.lit { background: #f1f4f8; }
.task + .task.wide { width: 107px; margin-left: -7px; }
.task.alert { background: #f3c5a6; border-color: #d2692c; }
.tray { display: flex; align-items: center; gap: 5px; margin-left: auto; }
.battery-time { width: 40px; height: 15px; margin-right: 5px; text-align: center; font-size: 9px; line-height: 15px; color: #fff; background: linear-gradient(#2b7ab3, #0b4a80); border-right: 2px solid #0a2b4a; }
.clock { display: flex; flex-direction: column; text-align: center; line-height: 12px; margin: 0 3px; }
.bell-wrap { position: relative; width: 15px; height: 15px; }
.bell-wrap b { position: absolute; right: -2px; bottom: -1px; width: 10px; height: 10px; font-size: 7px; line-height: 9px; text-align: center; background: #d5d8de; border: 1px solid #888; border-radius: 50%; }
```
